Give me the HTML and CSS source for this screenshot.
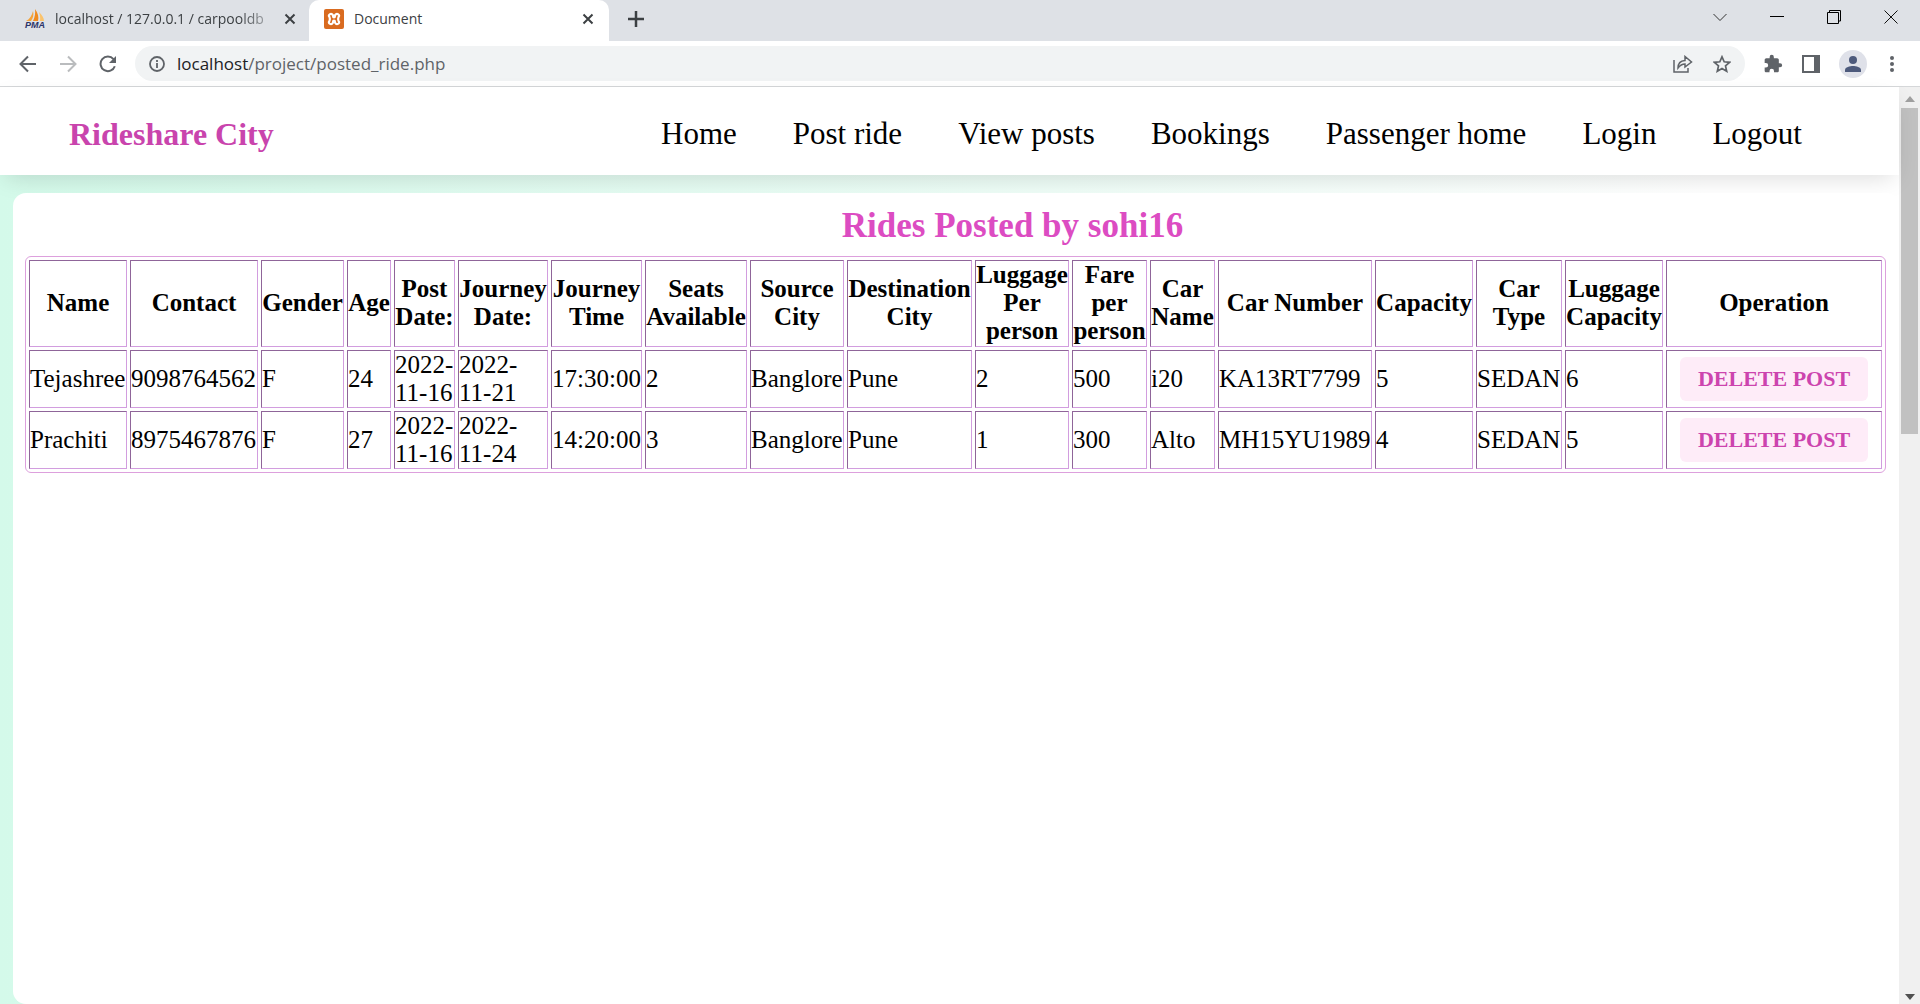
FILE: index.html
```
<!DOCTYPE html>
<html lang="en">
<head>
<meta charset="utf-8">
<title>Document</title>
<link rel="stylesheet" href="styles.css">
</head>
<body>
<div class="browser">
  <div class="tabstrip">
    <div class="tab">
      <svg class="favicon" width="20" height="20" viewBox="0 0 20 20" aria-hidden="true"><path d="M8 2c1 4 0 7-2 10H1c4-2 6-6 7-10z" fill="#f5a33a"/><path d="M10 0c3 4 4 8 3 12H8c2-4 2.500-8 2-12z" fill="#f08b1f"/><path d="M14 3c3 3 5 6 5 9h-4c.500-3 0-6-1-9z" fill="#fbc36b"/><text x="0" y="19" class="pma">PMA</text></svg>
      <span class="tab-title tab-title-fade">localhost / 127.0.0.1 / carpooldb</span>
      <button class="tab-close" aria-label="Close tab"><svg width="12" height="12" viewBox="0 0 12 12"><path d="M1.500 1.500l9 9M10.500 1.500l-9 9" stroke="#3c4043" stroke-width="2"/></svg></button>
    </div>
    <div class="tab tab-active">
      <svg class="favicon" width="20" height="20" viewBox="0 0 20 20" aria-hidden="true"><rect width="20" height="20" rx="2" fill="#d96b20"/><path d="M6 5.200a2.200 2.200 0 0 1 3.100 2.300q0 .9.900.9t.9-.9a2.200 2.200 0 0 1 3.100-2.300q2 1 .5 2.900-.8 1.900 0 3.800 1.500 1.900-.5 2.900a2.200 2.200 0 0 1-3.100-2.300q0-.9-.9-.9t-.9.900a2.200 2.200 0 0 1-3.100 2.300q-2-1-.5-2.900.8-1.900 0-3.800-1.500-1.900.5-2.900z" fill="none" stroke="#fff" stroke-width="2.200" stroke-linejoin="round"/></svg>
      <span class="tab-title">Document</span>
      <button class="tab-close" aria-label="Close tab"><svg width="12" height="12" viewBox="0 0 12 12"><path d="M1.500 1.500l9 9M10.500 1.500l-9 9" stroke="#3c4043" stroke-width="2"/></svg></button>
    </div>
    <button class="new-tab" aria-label="New tab"><svg width="16" height="16" viewBox="0 0 16 16"><path d="M8 0v16M0 8h16" stroke="#3c4043" stroke-width="2.500"/></svg></button>
    <div class="window-controls">
      <button aria-label="Search tabs"><svg width="14" height="14" viewBox="0 0 14 14"><path d="M.5 4l6.500 6.500L13.500 4" fill="none" stroke="#333"/></svg></button>
      <button aria-label="Minimize"><svg width="14" height="14" viewBox="0 0 14 14"><path d="M0 6.500h14" stroke="#000"/></svg></button>
      <button aria-label="Restore"><svg width="14" height="14" viewBox="0 0 14 14"><path d="M.5 2.500h11v11H.5zM2.500 2.500V.5h11v10.500H11.500" fill="none" stroke="#000"/></svg></button>
      <button aria-label="Close"><svg width="14" height="14" viewBox="0 0 14 14"><path d="M.5.5l13 13M13.500.5l-13 13" stroke="#111"/></svg></button>
    </div>
  </div>
  <div class="toolbar">
    <button class="tool" aria-label="Back"><svg width="18" height="18" viewBox="0 0 18 18"><path d="M17 9H2M9 1.500L1.500 9 9 16.500" fill="none" stroke="#5f6368" stroke-width="2"/></svg></button>
    <button class="tool" aria-label="Forward"><svg width="18" height="18" viewBox="0 0 18 18"><path d="M1 9h15M9 1.500L16.500 9 9 16.500" fill="none" stroke="#babcbe" stroke-width="2"/></svg></button>
    <button class="tool" aria-label="Reload"><svg width="18" height="18" viewBox="0 0 18 18"><path d="M14.500 4.200a7.300 7.300 0 1 0 1.300 7" fill="none" stroke="#5f6368" stroke-width="2"/><path d="M17 1v7h-7z" fill="#5f6368"/></svg></button>
    <div class="omnibox">
      <svg width="16" height="16" viewBox="0 0 16 16" aria-hidden="true"><circle cx="8" cy="8" r="7" fill="none" stroke="#5f6368" stroke-width="1.800"/><path d="M8 7v5M8 4v2" stroke="#5f6368" stroke-width="1.800"/></svg>
      <span class="url"><span class="host">localhost</span>/project/posted_ride.php</span>
      <button aria-label="Share"><svg width="20" height="18" viewBox="0 0 20 18"><path d="M1 5v12h14v-4M5 13q0-7 7-7.500V1.500L18.500 7 12 12V9q-4 0-7 4z" fill="none" stroke="#5f6368" stroke-width="1.500"/></svg></button>
      <button aria-label="Bookmark"><svg width="18" height="18" viewBox="0 0 18 18"><path d="M9 1.800l2.200 5 5.400.5-4.100 3.600 1.200 5.300L9 13.400l-4.700 2.800 1.200-5.300L1.400 7.300l5.400-.5z" fill="none" stroke="#5f6368" stroke-width="1.700"/></svg></button>
    </div>
    <div class="actions">
      <button aria-label="Extensions"><svg width="20" height="20" viewBox="0 0 24 24"><path d="M20.500 11H19V7c0-1.100-.9-2-2-2h-4V3.500a2.500 2.500 0 0 0-5 0V5H4c-1.100 0-2 .9-2 2v3.800h1.500a2.700 2.700 0 0 1 0 5.400H2V20c0 1.100.9 2 2 2h3.800v-1.500a2.700 2.700 0 0 1 5.400 0V22H17c1.100 0 2-.9 2-2v-4h1.500a2.500 2.500 0 0 0 0-5z" fill="#5f6368"/></svg></button>
      <button aria-label="Side panel"><svg width="18" height="18" viewBox="0 0 18 18"><path d="M1 1h16v16H1z" fill="none" stroke="#5f6368" stroke-width="2"/><path d="M12 1h5v16h-5z" fill="#5f6368"/></svg></button>
      <button aria-label="Profile"><svg width="28" height="28" viewBox="0 0 28 28"><circle cx="14" cy="14" r="14" fill="#dfe1e9"/><circle cx="14" cy="10" r="4" fill="#4d5a7c"/><path d="M6 22v-2c0-3 5-4 8-4s8 1 8 4v2z" fill="#4d5a7c"/></svg></button>
      <button class="menu" aria-label="Menu"><svg width="4" height="18" viewBox="0 0 4 18"><g fill="#5f6368"><circle cx="2" cy="3" r="2"/><circle cx="2" cy="9" r="2"/><circle cx="2" cy="15" r="2"/></g></svg></button>
    </div>
  </div>
  <div class="viewport">
    <div class="page">
      <header class="site-header">
        <a class="logo" href="#">Rideshare City</a>
        <nav class="nav">
          <a href="#">Home</a>
          <a href="#">Post ride</a>
          <a href="#">View posts</a>
          <a href="#">Bookings</a>
          <a href="#">Passenger home</a>
          <a href="#">Login</a>
          <a href="#">Logout</a>
        </nav>
      </header>
      <main class="card">
        <h1 class="title">Rides Posted by sohi16</h1>
        <table class="rides">
          <colgroup>
            <col class="c-name"><col class="c-contact"><col class="c-gender"><col class="c-age"><col class="c-posted"><col class="c-date"><col class="c-time"><col class="c-seats"><col class="c-source"><col class="c-dest"><col class="c-bags"><col class="c-fare"><col class="c-car"><col class="c-plate"><col class="c-capacity"><col class="c-type"><col class="c-boot"><col>
          </colgroup>
          <thead>
            <tr><th>Name</th><th>Contact</th><th>Gender</th><th>Age</th><th>Post Date:</th><th>Journey Date:</th><th>Journey Time</th><th>Seats Available</th><th>Source City</th><th>Destination City</th><th>Luggage Per person</th><th>Fare per person</th><th>Car Name</th><th>Car Number</th><th>Capacity</th><th>Car Type</th><th>Luggage Capacity</th><th>Operation</th></tr>
          </thead>
          <tbody>
            <tr><td>Tejashree</td><td>9098764562</td><td>F</td><td>24</td><td>2022-11-16</td><td>2022-11-21</td><td>17:30:00</td><td>2</td><td>Banglore</td><td>Pune</td><td>2</td><td>500</td><td>i20</td><td>KA13RT7799</td><td>5</td><td>SEDAN</td><td>6</td><td><button class="delete">DELETE POST</button></td></tr>
            <tr><td>Prachiti</td><td>8975467876</td><td>F</td><td>27</td><td>2022-11-16</td><td>2022-11-24</td><td>14:20:00</td><td>3</td><td>Banglore</td><td>Pune</td><td>1</td><td>300</td><td>Alto</td><td>MH15YU1989</td><td>4</td><td>SEDAN</td><td>5</td><td><button class="delete">DELETE POST</button></td></tr>
          </tbody>
        </table>
      </main>
    </div>
    <div class="scrollbar" aria-hidden="true">
      <svg width="10" height="6" viewBox="0 0 10 6"><path d="M0 6l5-6 5 6z" fill="#a0a0a0"/></svg>
      <div class="track"><div class="thumb"></div></div>
      <svg width="10" height="6" viewBox="0 0 10 6"><path d="M0 0h10L5 6z" fill="#505050"/></svg>
    </div>
  </div>
</div>
</body>
</html>
```
FILE: styles.css
```
* { box-sizing: border-box; }
body { margin: 0; font-family: "Liberation Serif", "Times New Roman", serif; color: #000; background: #fff; }
button { display: flex; align-items: center; justify-content: center; padding: 0; border: 0; background: none; font: inherit; }
svg { display: block; flex: none; }
a { text-decoration: none; }

.browser { display: flex; flex-direction: column; height: 100vh; overflow: hidden; }

.tabstrip { display: flex; align-items: stretch; height: 41px; background: #dee1e6; font: 14px/20px "Open Sans", sans-serif; color: #3c4043; }
.tab { display: flex; align-items: center; width: 309px; padding: 0 12px 4px 25px; }
.tab-active { width: 300px; padding: 0 14px 4px 15px; background: #fff; border-radius: 10px 10px 0 0; }
.favicon { overflow: visible; }
.tab-title { flex: 1; margin-left: 10px; overflow: hidden; white-space: nowrap; }
.tab-title-fade { margin-right: -8px; mask-image: linear-gradient(90deg, #000 82%, transparent 102%); }
.tab-close { width: 14px; margin-left: 12px; }
.pma { font: italic bold 9px "Liberation Sans", sans-serif; fill: #2c3468; }
.new-tab { width: 54px; padding-bottom: 4px; }
.window-controls { display: flex; margin-left: auto; padding-right: 1px; }
.window-controls button { width: 57px; padding-bottom: 8px; }

.toolbar { display: flex; align-items: center; height: 46px; padding: 0 26px 0 8px; border-bottom: 1px solid #d5d7d9; }
.tool { width: 40px; height: 34px; }
.omnibox { flex: 1; display: flex; align-items: center; height: 35px; margin-left: 7px; padding: 0 14px; gap: 20px; border-radius: 18px; background: #f1f3f4; }
.url { flex: 1; margin-left: -8px; font: 17px/24px "Open Sans", sans-serif; color: #5f6368; }
.host { color: #202124; }
.actions { display: flex; align-items: center; gap: 19px; margin-left: 18px; }
.menu { margin-left: 4px; }

.viewport { flex: 1; display: flex; min-height: 0; }
.page { flex: 1; display: flex; flex-direction: column; min-width: 0; background: linear-gradient(90deg, #d4faea, #fff 90%); }
.site-header { position: relative; display: flex; align-items: center; justify-content: space-between; height: 88px; padding: 5px 97px 0 69px; background: #fff; box-shadow: 0 8px 25px -6px rgba(0, 0, 0, .15); }
.logo { font-size: 32px; line-height: 36px; font-weight: bold; color: #c944ad; }
.nav { display: flex; gap: 56px; }
.nav a { font-size: 31px; line-height: 36px; color: #000; }
.card { position: relative; flex: 1; margin: 18px 0 0 13px; padding: 13px 13px 12px 12px; border-radius: 13px; background: #fff; }
.title { margin: 0 0 10px 114px; font-size: 35px; line-height: 40px; text-align: center; color: #dc4cc2; }

.rides { table-layout: fixed; width: 100%; border: 1px solid #dda0dd; border-radius: 6px; border-spacing: 3px; font-size: 25px; line-height: 28px; }
.rides th, .rides td { border: 1px solid #d29ddf; border-top-color: #8f6599; border-left-color: #8f6599; padding: 0; }
.rides th { padding-bottom: 1px; }
.c-name { width: 98px; }
.c-contact { width: 128px; }
.c-gender { width: 83px; }
.c-age { width: 44px; }
.c-posted { width: 61px; }
.c-date { width: 90px; }
.c-time { width: 91px; }
.c-seats { width: 102px; }
.c-source { width: 94px; }
.c-dest { width: 125px; }
.c-bags { width: 94px; }
.c-fare { width: 75px; }
.c-car { width: 65px; }
.c-plate { width: 154px; }
.c-capacity { width: 98px; }
.c-type { width: 86px; }
.c-boot { width: 98px; }
.delete { min-width: 188px; height: 44px; margin: 6px auto; border-radius: 6px; background: #feecf8; color: #cc44ae; font-size: 22px; font-weight: bold; white-space: nowrap; }

.scrollbar { display: flex; flex-direction: column; align-items: center; width: 21px; padding: 9px 0 4px; background: #f0f0f0; }
.track { flex: 1; align-self: stretch; padding: 6px 2px; }
.thumb { height: 37%; background: #c1c1c1; }
```
